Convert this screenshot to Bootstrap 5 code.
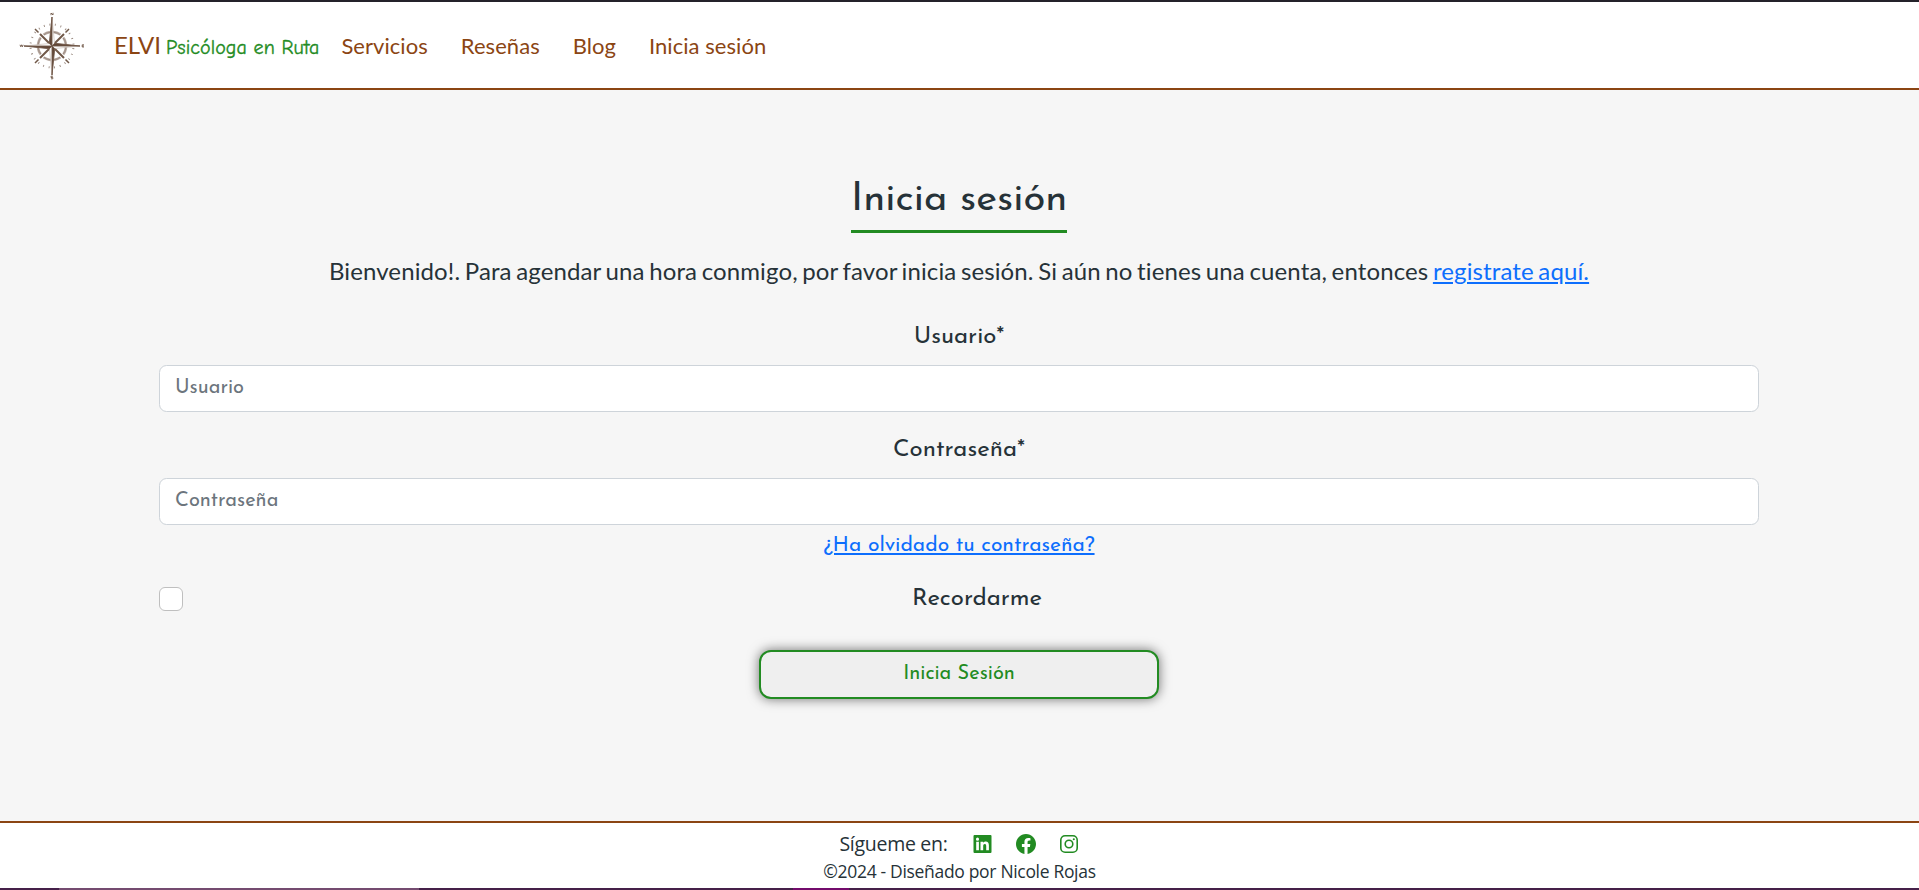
<!DOCTYPE html>
<html lang="es">
<head>
<meta charset="utf-8">
<meta name="viewport" content="width=device-width, initial-scale=1">
<title>ELVI Psicóloga en Ruta</title>
<link rel="stylesheet" href="https://cdn.jsdelivr.net/npm/bootstrap@5.3.0/dist/css/bootstrap.min.css">
<style>
  body { height: 890px; overflow: hidden; background: #f6f6f6; color: #263238; font-family: Lato, sans-serif; }
  a { color: #0d6efd; }
  .site-header { height: 90px; border-top: 2px solid #24222a; border-bottom: 2px solid #8b4513; }
  .site-header a { color: #8b4513; white-space: nowrap; line-height: 36px; }
  .logo { width: 66px; height: 68px; margin-left: 19px; margin-right: 29px; position: relative; top: 1px; }
  .brand { padding-top: 2px; }
  .brand-name { font-size: 24px; }
  .brand-sub { color: #228b22; font-family: "Comic Neue", "Noto Sans", sans-serif; font-size: 20px; letter-spacing: .07px; margin-left: 5px; -webkit-text-stroke: .35px #228b22; }
  .menu { gap: 33px; margin-left: 22px; padding-top: 2px; }
  .menu-link { font-size: 22px; letter-spacing: .05px; }
  main { padding-top: 76px; padding-right: 1px; }
  .josefin { font-family: "Josefin Sans", Lato, sans-serif; }
  .page-title { width: 216px; height: 67px; border-bottom: 3px solid #228b22; font-size: 40px; line-height: 68px; white-space: nowrap; }
  .intro { font-size: 24px; line-height: 34px; margin-top: 21px; white-space: nowrap; letter-spacing: .12px; word-spacing: -1.7px; }
  .login-form { width: 1600px; padding-top: 31px; }
  .field-label { font-size: 24px; line-height: 36px; white-space: nowrap; }
  .field-gap { margin-bottom: 10px; }
  .login-form .form-control { height: 47px; padding: 0 15px 2px; font-size: 20px; line-height: 43px; border-color: #ced4da; border-radius: 7.5px; margin-bottom: 20px; }
  .login-form .form-control.tight { margin-bottom: 6px; }
  .login-form .form-control::placeholder { color: #6c757d; }
  .forgot { font-size: 21px; line-height: 30px; margin-bottom: 20px; }
  .login-form .form-check-input { width: 24px; height: 24px; margin: 0 12px 0 0; border-radius: 6px; border-color: #bfbfbf; }
  .btn-login { width: 400px; height: 49px; margin-top: 33px; border: 2px solid #228b22; border-radius: 12px; background: #efefef; color: #228b22; font-size: 20px; box-shadow: 0 0 12px rgba(0,0,0,.55); padding: 0 0 2px; }
  .site-footer { height: 69px; border-top: 2px solid #8b4513; font-family: "Segoe UI", "Open Sans", sans-serif; }
  .follow { font-size: 19.5px; line-height: 30px; letter-spacing: -.28px; margin-top: 6px; margin-right: 2px; height: 30px; }
  .social { gap: 24px; margin-left: 25px; color: #228b22; }
  .credit { font-size: 17.5px; line-height: 24px; letter-spacing: -.32px; }
  .taskbar { height: 2px; background: linear-gradient(90deg, #452049 59px, #744b70 59px 419px, #452049 419px 793px, #730b6c 793px 849px, #452049 849px); }
</style>
</head>
<body class="d-flex flex-column">
<header class="site-header bg-white d-flex align-items-center flex-shrink-0">
  <a href="#"><svg class="logo d-block" viewBox="0 0 66 68" fill="none" stroke="#705848">
    <circle cx="33" cy="34" r="14" stroke="#b8aaa2" stroke-width="2.6"/>
    <circle cx="33" cy="34" r="14" stroke="#8d7b70" stroke-width=".6"/>
    <circle cx="33" cy="34" r="21.5" stroke="#9a8a80" stroke-width="2" stroke-dasharray=".9 4.73" stroke-dashoffset="-2.3"/>
    <path d="M21 22l24 24M45 22L21 46" stroke="#fff" stroke-width="4"/>
    <path d="M21 22l24 24M45 22L21 46" stroke-width="2"/>
    <path d="M16 17l3.5 3.5M50 17l-3.5 3.5M16 51l3.5-3.5M50 51l-3.5-3.5" stroke-width="1.5"/>
    <path d="M33 5l2.5 26.5L61 34l-25.5 2.5L33 63l-2.500-26.500L5 34l25.500-2.500z" fill="#fff" stroke="#b5a59b" stroke-width=".5"/>
    <path d="M33 5v29l-2.700-2.500zM61 34H33l2.500-2.700zM33 63V34l2.700 2.500zM5 34h28l-2.500 2.700z" fill="#604536" stroke="#705848" stroke-width=".9"/>
    <path d="M32 3.200V1l2 2V.8M32 66.800h1.800v-1.300H32v-1.300h2M1 32.800l.8 2 .8-2 .8 2 .8-2M65 32.800h-1.800v2.200H65M63.200 34H65" stroke-width=".9"/>
  </svg></a>
  <a href="#" class="brand text-decoration-none d-flex align-items-baseline"><span class="brand-name">ELVI</span><span class="brand-sub">Psicóloga en Ruta</span></a>
  <nav class="menu d-flex">
    <a href="#" class="menu-link text-decoration-none">Servicios</a>
    <a href="#" class="menu-link text-decoration-none">Reseñas</a>
    <a href="#" class="menu-link text-decoration-none">Blog</a>
    <a href="#" class="menu-link text-decoration-none">Inicia sesión</a>
  </nav>
</header>
<main class="flex-grow-1 d-flex flex-column align-items-center">
  <h1 class="page-title josefin fw-normal text-center mb-0">Inicia sesión</h1>
  <p class="intro mb-0">Bienvenido!. Para agendar una hora conmigo, por favor inicia sesión. Si aún no tienes una cuenta, entonces <a href="#">registrate aquí.</a></p>
  <form class="login-form josefin text-center">
    <label class="field-label field-gap d-block" for="usuario">Usuario*</label>
    <input class="form-control" id="usuario" type="text" placeholder="Usuario">
    <label class="field-label field-gap d-block" for="clave">Contraseña*</label>
    <input class="form-control tight" id="clave" type="password" placeholder="Contraseña">
    <div class="forgot"><a href="#">¿Ha olvidado tu contraseña?</a></div>
    <div class="d-flex align-items-center">
      <input class="form-check-input flex-shrink-0" type="checkbox" id="recordar">
      <label class="field-label flex-grow-1" for="recordar">Recordarme</label>
    </div>
    <button type="button" class="btn-login">Inicia Sesión</button>
  </form>
</main>
<footer class="site-footer bg-white d-flex flex-column align-items-center flex-shrink-0">
  <div class="follow d-flex align-items-center">
    <span>Sígueme en:</span>
    <div class="social d-flex align-items-center">
      <svg width="19" height="18" viewBox="0 0 18 18" fill="currentColor"><path fill-rule="evenodd" d="M1 0h16q1 0 1 1v16q0 1-1 1H1q-1 0-1-1V1q0-1 1-1zM2.700 6.800v8.500h2.700V6.800zM4 2.600a1.550 1.550 0 1 0 0 3.100 1.550 1.550 0 0 0 0-3.100zM7 6.800v8.500h2.700v-4.200c0-1.300.5-2.200 1.600-2.200s1.400.9 1.400 2.200v4.200h2.700v-4.900c0-2.500-1.100-3.800-3.100-3.800-1.300 0-2.200.6-2.600 1.400V6.800z"/></svg>
      <svg width="20" height="20" viewBox="0 0 16 16" fill="currentColor"><path d="M16 8.050C16 3.600 12.420 0 8 0S0 3.600 0 8.050C0 12.070 2.930 15.400 6.750 16v-5.620H4.720V8.050h2.030V6.270c0-2.020 1.200-3.130 3.020-3.130.88 0 1.790.16 1.790.16v1.980h-1.010c-.99 0-1.300.62-1.300 1.260v1.510h2.220l-.35 2.330H9.250V16C13.070 15.400 16 12.070 16 8.050z"/></svg>
      <svg width="18" height="18" viewBox="0 0 18 18" fill="none" stroke="currentColor" stroke-width="1.600"><rect x=".8" y=".8" width="16.400" height="16.400" rx="4.300"/><circle cx="9" cy="9" r="3.800"/><circle cx="13.800" cy="4.200" r="1.050" fill="currentColor" stroke="none"/></svg>
    </div>
  </div>
  <div class="credit">©2024 - Diseñado por Nicole Rojas</div>
  <div class="taskbar w-100 mt-auto"></div>
</footer>
<script src="https://cdn.jsdelivr.net/npm/bootstrap@5.3.0/dist/js/bootstrap.bundle.min.js"></script>
</body>
</html>
